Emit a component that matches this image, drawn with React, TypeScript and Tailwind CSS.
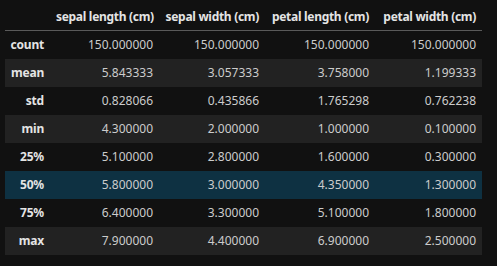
import React from "react";

const cols = ["sepal length (cm)", "sepal width (cm)", "petal length (cm)", "petal width (cm)"];
const rows: [string, string[]][] = [
  ["count", ["150.000000", "150.000000", "150.000000", "150.000000"]],
  ["mean", ["5.843333", "3.057333", "3.758000", "1.199333"]],
  ["std", ["0.828066", "0.435866", "1.765298", "0.762238"]],
  ["min", ["4.300000", "2.000000", "1.000000", "0.100000"]],
  ["25%", ["5.100000", "2.800000", "1.600000", "0.300000"]],
  ["50%", ["5.800000", "3.000000", "4.350000", "1.300000"]],
  ["75%", ["6.400000", "3.300000", "5.100000", "1.800000"]],
  ["max", ["7.900000", "4.400000", "6.900000", "2.500000"]],
];

export default function App() {
  return (
    <div
      className="w-[497px] h-[266px] bg-[#111111] text-[#cccccc] text-[12px] pl-[5px]"
      style={{ fontFamily: '"Noto Sans", "Open Sans", sans-serif' }}
    >
      <div className="w-[477px]">
        <div className="grid grid-cols-[45px_109px_106px_110px_107px] h-[31px] items-center pt-[4px] border-b border-[#5a5a5a] font-bold text-[#e4e4e4] tracking-[-0.3px]">
          <div />
          {cols.map((c) => (
            <div key={c} className="text-right px-[6px] whitespace-nowrap">
              {c}
            </div>
          ))}
        </div>
        {rows.map(([label, vals], i) => (
          <div
            key={label}
            className={
              "grid grid-cols-[45px_109px_106px_110px_107px] h-[28px] items-center " +
              (label === "50%" ? "bg-[#0e3142]" : i % 2 === 1 ? "bg-[#222222]" : "")
            }
          >
            <div className="text-right pr-[6px] font-bold text-[#e4e4e4] whitespace-nowrap tracking-[-0.2px]">{label}</div>
            {vals.map((v, j) => (
              <div key={j} className="text-right px-[6px] whitespace-nowrap">
                {v}
              </div>
            ))}
          </div>
        ))}
      </div>
    </div>
  );
}
